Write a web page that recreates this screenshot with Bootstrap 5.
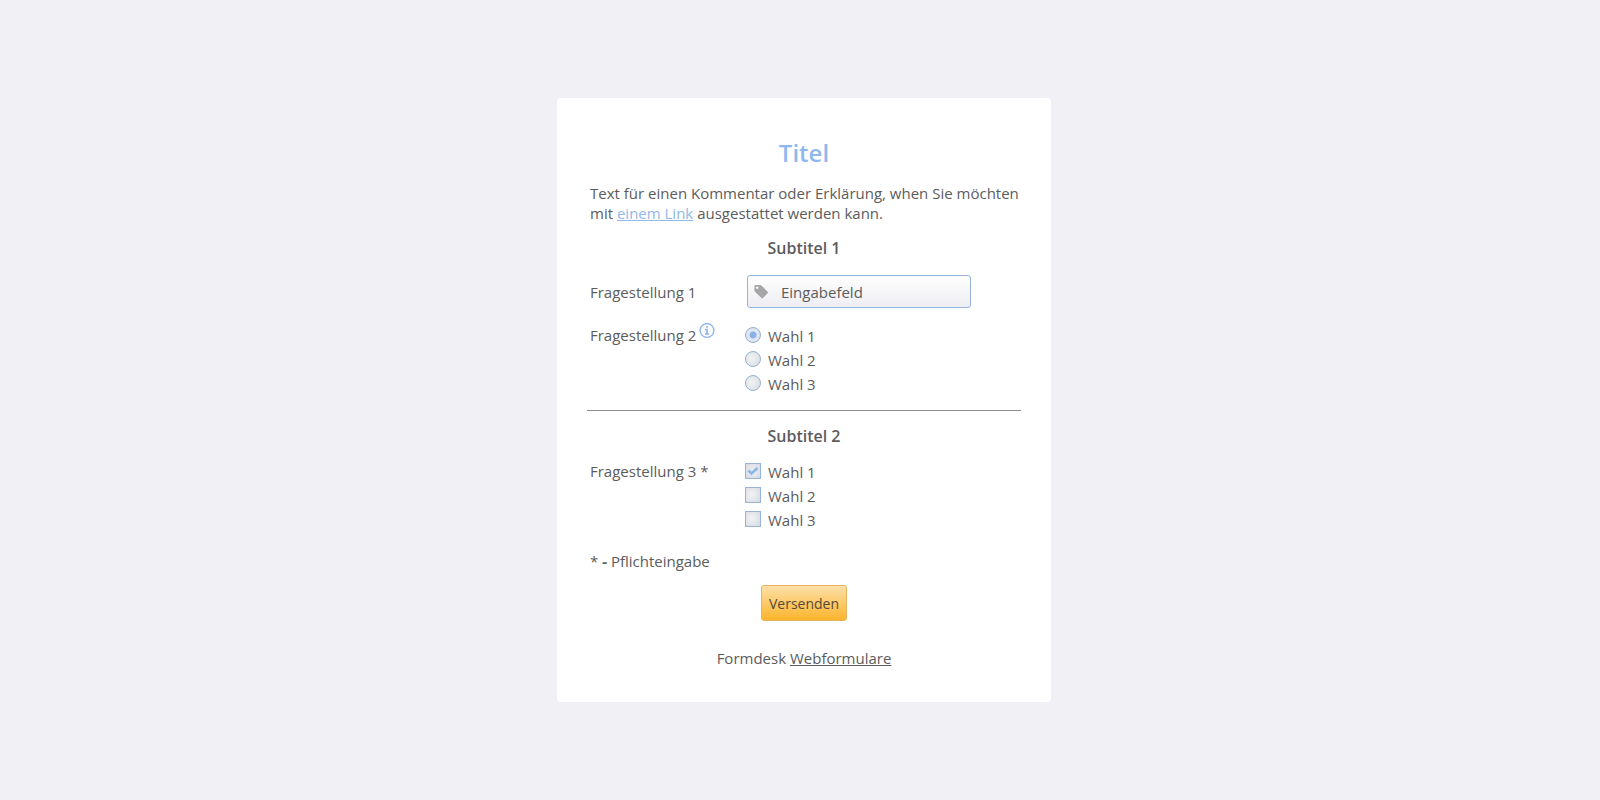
<!DOCTYPE html>
<html lang="de">
<head>
<meta charset="utf-8">
<meta name="viewport" content="width=device-width, initial-scale=1">
<title>Titel</title>
<link href="https://cdn.jsdelivr.net/npm/bootstrap@5.3.0/dist/css/bootstrap.min.css" rel="stylesheet">
<style>
body { background: #f0f0f5; color: #5c5c5c; font: 15px/20px "Open Sans", "Noto Sans", sans-serif; }
.form-panel { max-width: 494px; padding: 39px 30px 34px; border-radius: 4px; }
.inset { padding-left: 3px; }
h1 { font-size: 24px; line-height: 32px; font-weight: 600; color: #8fb8f0; margin-bottom: 14px; }
h2 { font-size: 16px; line-height: 20px; font-weight: 600; margin-bottom: 0; }
.intro { margin-bottom: 15px; }
.intro a { color: #92b9e8; }
.question { flex: 0 0 157px; }
.question-row { margin-top: 17px; }
.question-row.radios { margin-top: 15px; }
.question-row.checks { margin-top: 13px; }
.choice-label { padding-top: 2px; }
.text-entry { max-width: 224px; height: 33px; border: 1px solid #92b4dd; border-radius: 3px; background: linear-gradient(#fff, #ededf3); }
.text-entry svg { flex: none; margin-left: 6px; }
.text-entry input { font-size: 15px; line-height: 20px; color: #5c5c5c; padding: 1px 6px 0 12px; min-width: 0; }
.choices { margin-left: -2px; }
.choice { height: 24px; gap: 7px; }
.choice .form-check-input { width: 16px; height: 16px; margin: 0; border: 1px solid #92b4dd; background-color: #e2e3e8; background-image: radial-gradient(circle at 40% 45%, #f4f4f4, #d6d9e0); background-size: auto; }
.choice .form-check-input[type=checkbox] { border-radius: 0; }
.choice .form-check-input[type=radio]:checked { background-image: radial-gradient(circle, #8ab2ea 0 3px, transparent 4px), radial-gradient(#f0f1f4, #d6dbe5); }
.choice .form-check-input[type=checkbox]:checked { background-image: url("data:image/svg+xml,%3Csvg xmlns='http://www.w3.org/2000/svg' width='14' height='14' viewBox='0 0 14 14'%3E%3Cpath d='M2.5 6.5 5.5 9.5 11.5 4' fill='none' stroke='%238ab6e8' stroke-width='2.7'/%3E%3C/svg%3E"), radial-gradient(#f0f1f3, #d6d9e0); }
.choice label { padding-top: 2px; }
.info-btn { width: 16px; height: 16px; margin-left: 3px; }
.divider { margin: 15px 0; border-color: #8c8c93; opacity: 1; }
.required-note { margin: 20px 0 14px; }
.send-btn { width: 86px; height: 36px; padding: 2px 0 0; font-size: 14px; line-height: 20px; color: #544a38; border: 1px solid #e6b45c; border-radius: 3px; background: linear-gradient(#fde0a8, #fcb42c); }
.credit { margin-top: 27px; }
.credit a { color: #5c5c5c; }
</style>
</head>
<body>
<main class="min-vh-100 d-flex align-items-center justify-content-center ps-2">
  <form class="form-panel bg-white w-100">
    <h1 class="text-center">Titel</h1>
    <p class="intro inset">Text für einen Kommentar oder Erklärung, when Sie möchten mit <a href="#">einem Link</a> ausgestattet werden kann.</p>
    <h2 class="text-center">Subtitel 1</h2>

    <div class="question-row inset d-flex align-items-center">
      <label class="question" for="entry">Fragestellung 1</label>
      <div class="text-entry d-flex align-items-center flex-grow-1">
        <svg width="15" height="15" viewBox="0 0 15 15" aria-hidden="true"><path fill="#a6a6a6" fill-rule="evenodd" d="M1.4.9H6.100q.7 0 1.200.5l6.300 6.300q.8.8 0 1.600L9 14q-.8.8-1.600 0L.9 7.500Q.4 7 .4 6.300V1.900q0-1 1-1zM3.200 2.400a1.300 1.300 0 1 0 .01 0z"/></svg>
        <input id="entry" class="form-control border-0 bg-transparent shadow-none" type="text" value="Eingabefeld">
      </div>
    </div>

    <div class="question-row radios inset d-flex align-items-start" role="radiogroup" aria-labelledby="q2">
      <div class="question d-flex align-items-start">
        <span class="choice-label" id="q2">Fragestellung 2</span>
        <button class="info-btn btn p-0 border-0 d-flex" type="button" aria-label="Information">
          <svg width="16" height="16" viewBox="0 0 16 16" fill="none" stroke="#8ab4ee"><circle cx="8" cy="7.500" r="6.900" stroke-width="1.400"/><path stroke-width="1.600" d="M6 6.500h2V11M5.900 11h4.300M7.200 3.900h1.700"/></svg>
        </button>
      </div>
      <div class="choices">
        <div class="choice d-flex align-items-center"><input class="form-check-input" type="radio" name="r" id="r1" checked><label for="r1">Wahl 1</label></div>
        <div class="choice d-flex align-items-center"><input class="form-check-input" type="radio" name="r" id="r2"><label for="r2">Wahl 2</label></div>
        <div class="choice d-flex align-items-center"><input class="form-check-input" type="radio" name="r" id="r3"><label for="r3">Wahl 3</label></div>
      </div>
    </div>

    <hr class="divider">
    <h2 class="text-center">Subtitel 2</h2>

    <div class="question-row checks inset d-flex align-items-start" role="group" aria-labelledby="q3">
      <div class="question choice-label" id="q3">Fragestellung 3 *</div>
      <div class="choices">
        <div class="choice d-flex align-items-center"><input class="form-check-input" type="checkbox" id="c1" checked><label for="c1">Wahl 1</label></div>
        <div class="choice d-flex align-items-center"><input class="form-check-input" type="checkbox" id="c2"><label for="c2">Wahl 2</label></div>
        <div class="choice d-flex align-items-center"><input class="form-check-input" type="checkbox" id="c3"><label for="c3">Wahl 3</label></div>
      </div>
    </div>

    <p class="required-note inset">* <b>-</b> Pflichteingabe</p>
    <div class="text-center"><button class="send-btn btn" type="submit">Versenden</button></div>
    <p class="credit text-center mb-0">Formdesk <a href="#">Webformulare</a></p>
  </form>
</main>
<script src="https://cdn.jsdelivr.net/npm/bootstrap@5.3.0/dist/js/bootstrap.bundle.min.js"></script>
</body>
</html>
